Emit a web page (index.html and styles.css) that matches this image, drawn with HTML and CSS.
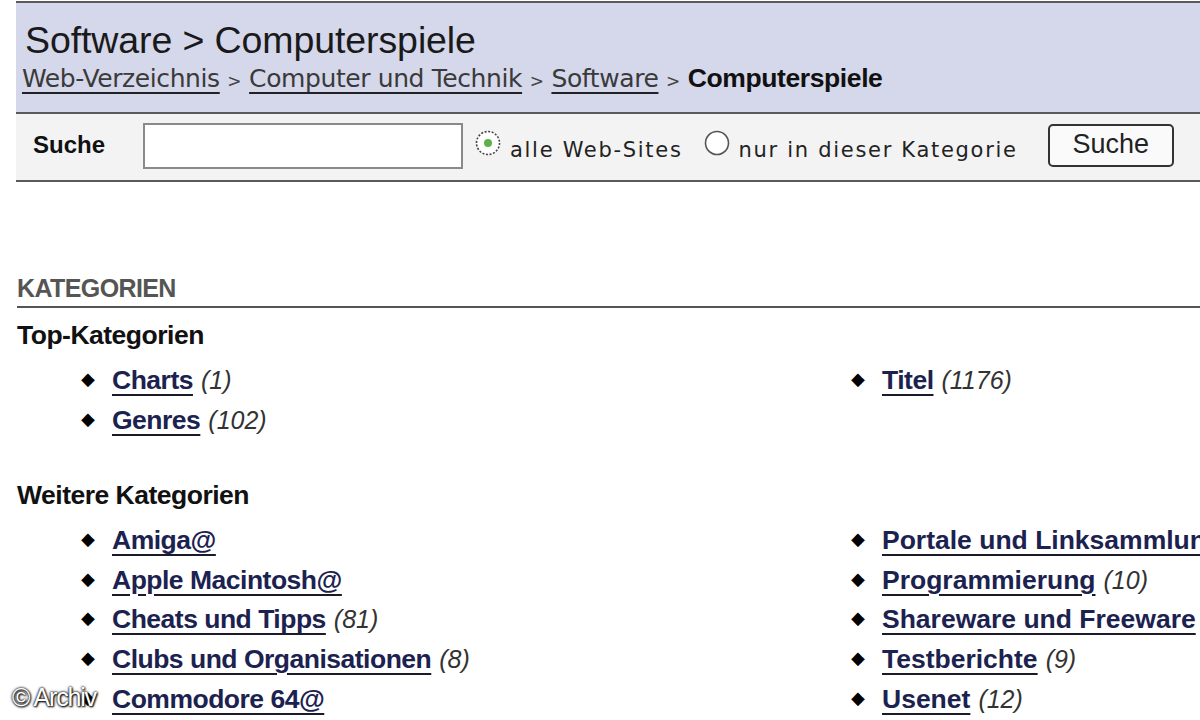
FILE: index.html
```html
<!DOCTYPE html>
<html lang="de">
<head>
<meta charset="utf-8">
<title>Software &gt; Computerspiele</title>
<link rel="stylesheet" href="styles.css">
</head>
<body>
<div class="page">
  <header class="header">
    <h1 class="title">Software &gt; Computerspiele</h1>
    <nav class="crumbs">
      <a href="#">Web-Verzeichnis</a> <span class="sep">&gt;</span> <a href="#">Computer und Technik</a> <span class="sep">&gt;</span> <a href="#">Software</a> <span class="sep">&gt;</span> <b class="current">Computerspiele</b>
    </nav>
  </header>
  <form class="searchbar">
    <span class="search-label">Suche</span>
    <span class="search-input"></span>
    <span class="radio">
      <svg class="radio-icon" width="28" height="28" viewBox="0 0 28 28"><circle cx="14" cy="14" r="11.5" fill="#fff" stroke="#444" stroke-width="1.6" stroke-dasharray="2 1.6"/><circle cx="14" cy="14" r="4" fill="#5fb04a"/></svg>
      <span class="radio-text">alle Web-Sites</span>
    </span>
    <span class="radio">
      <svg class="radio-icon" width="28" height="28" viewBox="0 0 28 28"><circle cx="14" cy="14" r="11.5" fill="#fff" stroke="#555" stroke-width="1.6"/></svg>
      <span class="radio-text">nur in dieser Kategorie</span>
    </span>
    <span class="button">Suche</span>
  </form>

  <section class="cats">
    <h2 class="cats-head">KATEGORIEN</h2>
    <h3 class="group">Top-Kategorien</h3>
    <div class="grid top">
      <ul class="list">
        <li><a href="#">Charts</a> <i>(1)</i></li>
        <li><a href="#">Genres</a> <i>(102)</i></li>
      </ul>
      <ul class="list">
        <li><a href="#">Titel</a> <i>(1176)</i></li>
      </ul>
    </div>
    <h3 class="group">Weitere Kategorien</h3>
    <div class="grid">
      <ul class="list">
        <li><a href="#">Amiga@</a></li>
        <li><a href="#">Apple Macintosh@</a></li>
        <li><a href="#">Cheats und Tipps</a> <i>(81)</i></li>
        <li><a href="#">Clubs und Organisationen</a> <i>(8)</i></li>
        <li><a href="#">Commodore 64@</a></li>
      </ul>
      <ul class="list clip">
        <li><a href="#">Portale und Linksammlungen</a> <i>(14)</i></li>
        <li><a href="#">Programmierung</a> <i>(10)</i></li>
        <li><a href="#">Shareware und Freeware</a> <i>(25)</i></li>
        <li><a href="#">Testberichte</a> <i>(9)</i></li>
        <li><a href="#">Usenet</a> <i>(12)</i></li>
      </ul>
    </div>
  </section>
  <div class="watermark">© Archiv</div>
</div>
</body>
</html>
```
FILE: styles.css
```css
html, body {
  margin: 0;
  padding: 0;
  background: #fff;
  overflow: hidden;
}
body {
  width: 1200px;
  height: 720px;
  font-family: "Liberation Sans", Arial, sans-serif;
  color: #111;
}
.page {
  position: relative;
  height: 720px;
  padding-left: 16px;
  padding-top: 1px;
  box-sizing: border-box;
  overflow: hidden;
}
.header {
  border-top: 2px solid #5a5a5a;
  background: #d5d7ea;
  height: 111px;
  box-sizing: border-box;
  padding: 15px 0 0 9px;
}
.title {
  margin: 0;
  font-weight: normal;
  font-size: 37.5px;
  line-height: 44px;
  color: #1a1a1a;
  letter-spacing: -0.1px;
}
.crumbs {
  margin-top: 1px;
  font-family: "DejaVu Sans", Verdana, sans-serif;
  font-size: 25px;
  line-height: 30px;
  color: #333;
  margin-left: -3px;
  white-space: nowrap;
  letter-spacing: -0.4px;
}
.crumbs a {
  color: #3a3a3a;
  text-decoration: underline;
  text-decoration-thickness: 2px;
  text-underline-offset: 5px;
  text-decoration-color: #222;
}
.crumbs .sep {
  font-size: 17px;
  color: #444;
  letter-spacing: 0;
}
.crumbs .current {
  font-family: "Liberation Sans", Arial, sans-serif;
  font-size: 26.5px;
  letter-spacing: -0.4px;
  color: #111;
}
.searchbar {
  margin: 0;
  border-top: 2px solid #5a5a5a;
  border-bottom: 2px solid #5a5a5a;
  background: #f3f3f3;
  height: 70px;
  box-sizing: border-box;
  display: flex;
  align-items: center;
  padding-left: 17px;
}
.search-label {
  font-weight: bold;
  font-size: 24px;
  color: #111;
  width: 110px;
  margin-top: -4px;
}
.search-input {
  width: 320px;
  height: 46px;
  background: #fff;
  border: 2px solid #8a8a8a;
  box-sizing: border-box;
  margin-top: -2px;
}
.radio {
  display: flex;
  align-items: center;
  margin-left: 11px;
}
.radio + .radio {
  margin-left: 20px;
}
.radio-icon {
  margin-top: -8px;
}
.radio-text {
  font-family: "DejaVu Sans", Verdana, sans-serif;
  font-size: 21px;
  letter-spacing: 1.7px;
  color: #222;
  margin-left: 8px;
  margin-top: 6px;
}
.radio:first-of-type .radio-text {
  letter-spacing: 2px;
}
.button {
  margin-left: 30px;
  width: 126px;
  height: 43px;
  box-sizing: border-box;
  border: 2px solid #333;
  border-radius: 5px;
  background: #fafafa;
  font-size: 27px;
  text-align: center;
  line-height: 36px;
  color: #222;
  margin-top: -4px;
}
.cats {
  padding-top: 91px;
}
.cats-head {
  margin: 0;
  font-size: 25px;
  font-weight: bold;
  color: #555;
  line-height: 30px;
  padding-bottom: 3px;
  border-bottom: 2px solid #555;
  letter-spacing: -0.6px;
  margin-left: 1px;
}
.group {
  margin: 12px 0 0 1px;
  font-size: 26.5px;
  line-height: 30px;
  font-weight: bold;
  color: #111;
  letter-spacing: -0.5px;
}
.grid {
  display: grid;
  grid-template-columns: 770px 1fr;
  padding-left: 65px;
  margin-top: 11px;
}
.grid.top {
  margin-bottom: 40px;
}
.list {
  margin: 0;
  padding: 0;
  list-style: none;
}
.list.clip {
  overflow: hidden;
}
.list li {
  display: flex;
  align-items: baseline;
  white-space: nowrap;
  height: 39.6px;
  line-height: 39.6px;
  font-size: 26.5px;
}
.list li::before {
  content: "◆";
  font-size: 18px;
  color: #000;
  width: 31px;
  flex: none;
  position: relative;
  top: -4px;
}
.list a {
  font-weight: bold;
  color: #1c2250;
  letter-spacing: -0.5px;
  text-decoration: underline;
  text-decoration-thickness: 2px;
  text-underline-offset: 5px;
  text-decoration-color: #1a1a2a;
}
.list.clip a {
  letter-spacing: 0;
}
.list i {
  font-size: 25px;
  color: #333;
  margin-left: 8px;
}
.watermark {
  position: absolute;
  left: 12px;
  top: 683px;
  font-size: 25px;
  color: #fff;
  letter-spacing: -1.2px;
  text-shadow: 0 0 2px #000, 0 0 3px #222, 1px 1px 2px #000;
}
```
